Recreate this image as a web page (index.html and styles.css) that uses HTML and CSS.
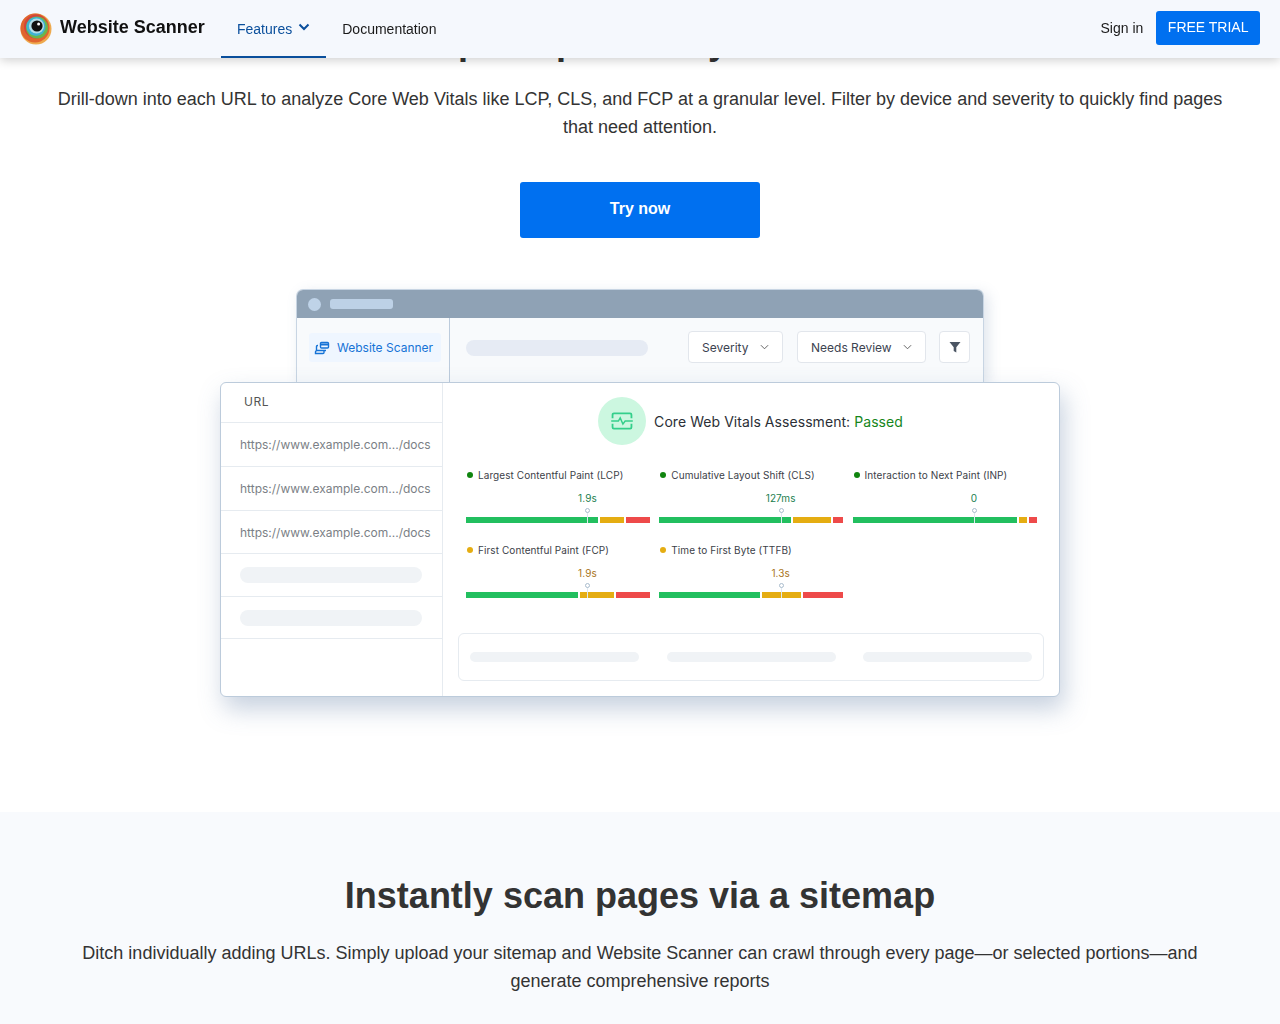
FILE: index.html
```html
<!DOCTYPE html>
<html>

<head>
    <title>Website Scanner</title>
    <link rel="stylesheet" href="styles.css">
</head>

<body>
    <header class="topbar">
        <a class="brand" href="#">
            <svg class="brand-logo" viewBox="0 0 32 32" width="32" height="32">
                <circle cx="16" cy="16" r="15.5" fill="#eeaa4e"/>
                <circle cx="15" cy="15" r="14.5" fill="#e0652f"/>
                <circle cx="16" cy="13.5" r="12" fill="#d2453c"/>
                <circle cx="17" cy="14.5" r="11" fill="#6db54a"/>
                <circle cx="16" cy="13.5" r="9.6" fill="#3fb3d2"/>
                <circle cx="16.5" cy="13" r="7.6" fill="#b4dde8"/>
                <circle cx="17" cy="13" r="5.6" fill="#111"/>
                <circle cx="18.6" cy="11" r="1.5" fill="#fff"/>
            </svg>
            <span>Website Scanner</span>
        </a>
        <nav class="nav">
            <a class="nav-item active" href="#">Features
                <svg class="nav-caret" viewBox="0 0 12 8" width="12" height="8">
                    <path d="M1.5 1.5 6 6l4.500-4.500" fill="none" stroke="currentColor" stroke-width="2"/>
                </svg>
            </a>
            <a class="nav-item" href="#">Documentation</a>
        </nav>
        <div class="topbar-right">
            <a class="signin" href="#">Sign in</a>
            <a class="trial" href="#">FREE TRIAL</a>
        </div>
    </header>

    <section class="hero">
        <h2>Explore per-file by domain</h2>
        <p>Drill-down into each URL to analyze Core Web Vitals like LCP, CLS, and FCP at a granular level. Filter by device and severity to quickly find pages that need attention.</p>
        <a class="try" href="#">Try now</a>

        <div class="mock">
            <div class="window">
                <div class="window-title">
                    <span class="window-dot"></span>
                    <span class="window-pill"></span>
                </div>
                <div class="toolbar">
                    <div class="toolbar-left">
                        <div class="product-tab">
                            <svg viewBox="0 0 16 16" width="16" height="16" fill="none" stroke="currentColor" stroke-width="1.400">
                                <rect x="6.500" y="2.500" width="8" height="5.500" rx="1"/>
                                <path d="M6.500 4.500h8" stroke-width="2"/>
                                <path d="M4 5.500H3.500a1 1 0 0 0-1 1V10"/>
                                <path d="M12 10.500H3a1.500 1.500 0 0 0-1.500 1.500v1.500H9a1 1 0 0 0 1-1v-2"/>
                            </svg>
                            <span>Website Scanner</span>
                        </div>
                    </div>
                    <div class="toolbar-main">
                        <span class="skeleton-search"></span>
                        <button class="select select-severity">Severity
                            <svg viewBox="0 0 10 6" width="9" height="6"><path d="M1 1l4 4 4-4" fill="none" stroke="#555" stroke-width="1"/></svg>
                        </button>
                        <button class="select select-review">Needs Review
                            <svg viewBox="0 0 10 6" width="9" height="6"><path d="M1 1l4 4 4-4" fill="none" stroke="#555" stroke-width="1"/></svg>
                        </button>
                        <button class="filter">
                            <svg viewBox="0 0 12 12" width="12" height="12"><path d="M0.500 1h11L7.300 6.200V11.500L4.700 10V6.200z" fill="#4b5563"/></svg>
                        </button>
                    </div>
                </div>
            </div>

            <div class="card">
                <div class="url-col">
                    <div class="url-head">URL</div>
                    <div class="url-row">https://www.example.com.../docs</div>
                    <div class="url-row">https://www.example.com.../docs</div>
                    <div class="url-row url-row-short">https://www.example.com.../docs</div>
                    <div class="url-row url-row-short"><span class="skeleton-row"></span></div>
                    <div class="url-row url-row-last"><span class="skeleton-row"></span></div>
                </div>
                <div class="report">
                    <div class="assessment">
                        <span class="assessment-icon">
                            <svg viewBox="0 0 24 20" width="22" height="18" fill="none" stroke="#34cf8b" stroke-width="2">
                                <path d="M1.500 7V3a1.500 1.500 0 0 1 1.500-1.500h18A1.500 1.500 0 0 1 22.500 3v4"/>
                                <path d="M1.500 13v4A1.500 1.500 0 0 0 3 18.500h18a1.500 1.500 0 0 0 1.500-1.500v-4"/>
                                <path d="M0 10h8l2-3.500 3 7 2.500-3.500H24" stroke-width="1.600"/>
                            </svg>
                        </span>
                        <span>Core Web Vitals Assessment: <b class="passed">Passed</b></span>
                    </div>

                    <div class="metrics">
                        <div class="metric good">
                            <div class="metric-name">Largest Contentful Paint (LCP)</div>
                            <div class="metric-value">1.9s</div>
                            <div class="gauge">
                                <span class="seg green" style="flex-grow: 132"></span>
                                <span class="seg yellow" style="flex-grow: 24"></span>
                                <span class="seg red" style="flex-grow: 24"></span>
                                <span class="marker"></span>
                            </div>
                        </div>
                        <div class="metric good">
                            <div class="metric-name">Cumulative Layout Shift (CLS)</div>
                            <div class="metric-value">127ms</div>
                            <div class="gauge">
                                <span class="seg green" style="flex-grow: 132"></span>
                                <span class="seg yellow" style="flex-grow: 39"></span>
                                <span class="seg red" style="flex-grow: 10"></span>
                                <span class="marker"></span>
                            </div>
                        </div>
                        <div class="metric good">
                            <div class="metric-name">Interaction to Next Paint (INP)</div>
                            <div class="metric-value">0</div>
                            <div class="gauge">
                                <span class="seg green" style="flex-grow: 164"></span>
                                <span class="seg yellow" style="flex-grow: 8"></span>
                                <span class="seg red" style="flex-grow: 8"></span>
                                <span class="marker"></span>
                            </div>
                        </div>
                        <div class="metric warn">
                            <div class="metric-name">First Contentful Paint (FCP)</div>
                            <div class="metric-value">1.9s</div>
                            <div class="gauge">
                                <span class="seg green" style="flex-grow: 112"></span>
                                <span class="seg yellow" style="flex-grow: 34"></span>
                                <span class="seg red" style="flex-grow: 34"></span>
                                <span class="marker"></span>
                            </div>
                        </div>
                        <div class="metric warn">
                            <div class="metric-name">Time to First Byte (TTFB)</div>
                            <div class="metric-value">1.3s</div>
                            <div class="gauge">
                                <span class="seg green" style="flex-grow: 101"></span>
                                <span class="seg yellow" style="flex-grow: 40"></span>
                                <span class="seg red" style="flex-grow: 40"></span>
                                <span class="marker"></span>
                            </div>
                        </div>
                    </div>

                    <div class="summary">
                        <span class="skeleton-summary"></span>
                        <span class="skeleton-summary"></span>
                        <span class="skeleton-summary"></span>
                    </div>
                </div>
            </div>
        </div>
    </section>

    <section class="sitemap">
        <h2>Instantly scan pages via a sitemap</h2>
        <p>Ditch individually adding URLs. Simply upload your sitemap and Website Scanner can crawl through every page—or selected portions—and generate comprehensive reports</p>
    </section>
</body>

</html>
```

FILE: styles.css
```css
body {
    margin: 0;
    font-family: "Liberation Sans", Arial, sans-serif;
    color: #333;
    background: #fff;
}

a {
    text-decoration: none;
    color: inherit;
}

/* top bar stays over the page */
.topbar {
    position: fixed;
    top: 0;
    left: 0;
    right: 0;
    z-index: 10;
    height: 58px;
    display: flex;
    align-items: stretch;
    padding: 0 20px;
    background-color: #f5f8fd;
    box-shadow: 0 2px 10px rgba(0, 0, 0, 0.2);
}

.brand {
    display: flex;
    align-items: center;
    gap: 8px;
    width: 201px;
    padding-bottom: 3px;
    font-size: 18px;
    font-weight: bold;
    color: #111;
}

.brand-logo {
    flex: none;
    margin-top: 2px;
}

.nav {
    display: flex;
}

.nav-item {
    display: flex;
    align-items: center;
    gap: 6px;
    padding: 2px 16px 0;
    font-size: 14px;
    color: #1a1a1a;
    border-bottom: 2px solid transparent;
}

.nav-item.active {
    color: #0a4f9c;
    border-bottom-color: #0a4f9c;
}

.nav-caret {
    margin-top: -5px;
}

.topbar-right {
    margin-left: auto;
    display: flex;
    align-items: center;
    gap: 13px;
    padding-bottom: 2px;
}

.signin {
    font-size: 14px;
    color: #1a1a1a;
}

.trial {
    padding: 0 11.500px;
    height: 34px;
    line-height: 33px;
    font-size: 14px;
    color: #fff;
    background-color: #0070f0;
    border-radius: 3px;
}

/* hero */
.hero {
    display: flex;
    flex-direction: column;
    align-items: center;
    height: 812px;
    box-sizing: border-box;
    padding-top: 19px;
}

.hero h2,
.sitemap h2 {
    margin: 0;
    font-size: 36px;
    line-height: 46px;
    font-weight: bold;
    color: #333;
}

.hero p,
.sitemap p {
    width: 1170px;
    margin: 0;
    font-size: 18px;
    line-height: 28px;
    text-align: center;
    color: #333;
}

.hero p {
    margin-top: 20px;
}

.try {
    width: 240px;
    height: 56px;
    margin-top: 41px;
    line-height: 54px;
    text-align: center;
    font-size: 16px;
    font-weight: bold;
    color: #fff;
    background-color: #0070f0;
    border-radius: 3px;
}

/* product mock */
.mock {
    margin-top: 51px;
    width: 840px;
    display: flex;
    flex-direction: column;
    align-items: center;
    font-family: Inter, "Liberation Sans", sans-serif;
}

.window {
    width: 688px;
    box-sizing: border-box;
    border: 1px solid #c8d5e3;
    border-bottom: none;
    border-radius: 7px 7px 0 0;
    background-color: #f8fafc;
    box-shadow: 4px 4px 14px rgba(90, 120, 160, 0.2);
}

.window-title {
    height: 28px;
    display: flex;
    align-items: center;
    gap: 9px;
    padding-left: 11px;
    background-color: #8fa2b5;
    border-radius: 6px 6px 0 0;
}

.window-dot {
    width: 13px;
    height: 13px;
    border-radius: 50%;
    background-color: #bfd3e8;
}

.window-pill {
    width: 63px;
    height: 10px;
    border-radius: 3px;
    background-color: #bdd1e6;
}

.toolbar {
    display: flex;
    height: 64px;
}

.toolbar-left {
    width: 153px;
    box-sizing: border-box;
    padding: 15px 8px 0 12px;
    border-right: 1px solid #bccbdc;
}

.product-tab {
    display: flex;
    align-items: center;
    gap: 7px;
    height: 29px;
    padding-left: 5px;
    font-size: 12px;
    color: #1673d6;
    background-color: #eff6ff;
    border-radius: 3px;
}

.toolbar-main {
    flex: 1;
    display: flex;
    align-items: flex-start;
    padding: 13px 0 0 16px;
}

.skeleton-search {
    width: 182px;
    height: 16px;
    margin-top: 9px;
    border-radius: 8px;
    background-color: #e6ebf4;
}

.select,
.filter {
    height: 32px;
    box-sizing: border-box;
    display: flex;
    align-items: center;
    font-family: inherit;
    font-size: 12px;
    color: #3c4350;
    background-color: #fff;
    border: 1px solid #e2e6ec;
    border-radius: 4px;
}

.select {
    justify-content: space-between;
    padding: 0 13px;
}

.select-severity {
    width: 95px;
    margin-left: 40px;
}

.select-review {
    width: 129px;
    margin-left: 14px;
}

.filter {
    width: 31px;
    margin-left: 13px;
    justify-content: center;
    padding: 0;
}

.card {
    width: 840px;
    height: 315px;
    box-sizing: border-box;
    display: flex;
    background-color: #fff;
    border: 1px solid #bccbdb;
    border-radius: 6px;
    box-shadow: 4px 12px 24px rgba(90, 120, 160, 0.34);
}

.url-col {
    width: 222px;
    flex: none;
    box-sizing: border-box;
    border-right: 1px solid #e6ebf0;
}

.url-head {
    height: 39px;
    line-height: 38px;
    padding-left: 23px;
    font-size: 12px;
    letter-spacing: 0.5px;
    color: #555;
    border-bottom: 1px solid #e6ebf0;
}

.url-row {
    height: 43px;
    display: flex;
    align-items: center;
    padding-left: 19px;
    font-size: 12px;
    color: #7b7f86;
    border-bottom: 1px solid #e6ebf0;
}

.url-row-short {
    height: 42px;
}

.url-row-last {
    height: 41px;
}

.skeleton-row {
    width: 182px;
    height: 16px;
    border-radius: 8px;
    background-color: #f0f3f6;
}

.report {
    flex: 1;
    min-width: 0;
    padding: 14px 15px 0;
}

.assessment {
    display: flex;
    align-items: center;
    justify-content: center;
    gap: 8px;
    height: 48px;
    padding-right: 1px;
    font-size: 14px;
    letter-spacing: 0.06px;
    color: #2b2f36;
}

.assessment-icon {
    width: 48px;
    height: 48px;
    display: flex;
    align-items: center;
    justify-content: center;
    border-radius: 50%;
    background-color: #ccf7e0;
}

.passed {
    font-weight: normal;
    color: #16861c;
}

.metrics {
    display: grid;
    grid-template-columns: repeat(3, 184px);
    column-gap: 9.250px;
    row-gap: 19px;
    padding: 23px 0 0 8px;
}

.metric {
    height: 56px;
    font-size: 10px;
    letter-spacing: 0.08px;
}

.metric-name {
    display: flex;
    align-items: center;
    height: 14px;
    color: #3c4148;
}

.metric-name::before {
    content: "";
    width: 6px;
    height: 6px;
    margin: 0 5px 0 1px;
    border-radius: 50%;
    background-color: #10850f;
}

.warn .metric-name::before {
    background-color: #e5ad12;
}

.metric-value {
    width: 132%;
    margin-top: 9px;
    line-height: 14px;
    text-align: center;
    color: #22804f;
}

.warn .metric-value {
    color: #a8741a;
}

.gauge {
    position: relative;
    display: flex;
    gap: 2px;
    height: 6px;
    margin-top: 12px;
}

.seg {
    flex-basis: 0;
}

.green {
    background-color: #22bf5f;
}

.yellow {
    background-color: #e5ad12;
}

.red {
    background-color: #ee4a4a;
}

.marker {
    position: absolute;
    left: 66%;
    top: -5px;
    width: 1px;
    height: 11px;
    background-color: #dfe8f0;
}

.marker::before {
    content: "";
    position: absolute;
    left: -2px;
    top: -4px;
    width: 3px;
    height: 3px;
    border: 1px solid #a9bccd;
    border-radius: 50%;
    background-color: #fff;
}

.summary {
    display: flex;
    justify-content: space-between;
    align-items: center;
    height: 48px;
    box-sizing: border-box;
    margin-top: 34px;
    padding: 0 11px;
    border: 1px solid #e6ebf0;
    border-radius: 6px;
}

.skeleton-summary {
    width: 169px;
    height: 10px;
    border-radius: 5px;
    background-color: #f0f3f6;
}

/* sitemap section */
.sitemap {
    display: flex;
    flex-direction: column;
    align-items: center;
    height: 212px;
    box-sizing: border-box;
    padding-top: 61px;
    background-color: #f8fafd;
}

.sitemap p {
    margin-top: 20px;
}
```
